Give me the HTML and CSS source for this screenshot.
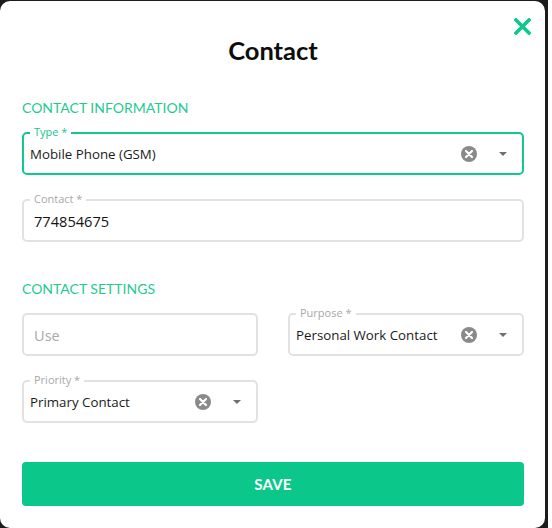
FILE: index.html
```html
<!DOCTYPE html>
<html>
<head>
<meta charset="utf-8">
<title>Contact</title>
<link rel="stylesheet" href="styles.css">
</head>
<body>
<div class="backdrop">
  <div class="modal">
    <button class="close" aria-label="Close">
      <svg width="17" height="17" viewBox="0 0 17 17"><path d="M2 2 L15 15 M15 2 L2 15" stroke="#0dc98b" stroke-width="3.6" stroke-linecap="square" fill="none"/></svg>
    </button>
    <h1 class="title">Contact</h1>

    <h2 class="section-title">CONTACT INFORMATION</h2>
    <div class="stack">
      <div class="field select focused">
        <span class="label">Type *</span>
        <span class="value">Mobile Phone (GSM)</span>
        <span class="clear"><svg width="16" height="16" viewBox="0 0 16 16"><circle cx="8" cy="8" r="8" fill="#8a8a8a"/><path d="M5 5 L11 11 M11 5 L5 11" stroke="#fff" stroke-width="2.2" stroke-linecap="round"/></svg></span>
        <span class="caret"></span>
      </div>
      <div class="field text">
        <span class="label">Contact *</span>
        <span class="value">774854675</span>
      </div>
    </div>

    <h2 class="section-title second">CONTACT SETTINGS</h2>
    <div class="grid">
      <div class="field text">
        <span class="placeholder">Use</span>
      </div>
      <div class="field select">
        <span class="label">Purpose *</span>
        <span class="value">Personal Work Contact</span>
        <span class="clear"><svg width="16" height="16" viewBox="0 0 16 16"><circle cx="8" cy="8" r="8" fill="#8a8a8a"/><path d="M5 5 L11 11 M11 5 L5 11" stroke="#fff" stroke-width="2.2" stroke-linecap="round"/></svg></span>
        <span class="caret"></span>
      </div>
      <div class="field select">
        <span class="label">Priority *</span>
        <span class="value">Primary Contact</span>
        <span class="clear"><svg width="16" height="16" viewBox="0 0 16 16"><circle cx="8" cy="8" r="8" fill="#8a8a8a"/><path d="M5 5 L11 11 M11 5 L5 11" stroke="#fff" stroke-width="2.2" stroke-linecap="round"/></svg></span>
        <span class="caret"></span>
      </div>
    </div>

    <button class="save">SAVE</button>
  </div>
</div>
</body>
</html>
```
FILE: styles.css
```css
html, body {
  margin: 0;
  padding: 0;
  background: #ffffff;
}
.backdrop {
  width: 548px;
  height: 528px;
  background: #1c1c1c;
  overflow: hidden;
  padding-top: 1px;
  box-sizing: border-box;
}
.modal {
  position: relative;
  width: 545px;
  height: 527px;
  box-sizing: border-box;
  background: #ffffff;
  border-radius: 10px;
  padding: 34px 21px 0 22px;
  font-family: "Open Sans", "Noto Sans", sans-serif;
}
.close {
  position: absolute;
  top: 17px;
  right: 14px;
  width: 17px;
  height: 17px;
  padding: 0;
  border: none;
  background: none;
  display: block;
}
.close svg { display: block; }
.title {
  margin: 0;
  text-align: center;
  font-family: Lato, sans-serif;
  font-weight: 700;
  font-size: 25.5px;
  line-height: 30px;
  color: #0d0d0d;
}
.section-title {
  margin: 33px 0 14px 0;
  font-family: Lato, sans-serif;
  font-weight: 400;
  font-size: 14px;
  line-height: 20px;
  color: #1fcb90;
}
.section-title.second {
  margin-top: 37px;
}
.stack {
  display: flex;
  flex-direction: column;
  gap: 24px;
}
.grid {
  display: grid;
  grid-template-columns: 236px 236px;
  column-gap: 30px;
  row-gap: 24px;
}
.field {
  position: relative;
  height: 43px;
  box-sizing: border-box;
  border: 2px solid #e2e2e2;
  border-radius: 5px;
  display: flex;
  align-items: center;
  font-size: 13.3px;
  color: #1a1a1a;
}
.field.focused {
  border-color: #12c88b;
}
.label {
  position: absolute;
  top: -9px;
  left: 6px;
  padding: 0 4px;
  background: #fff;
  font-size: 11px;
  line-height: 13px;
  color: #a8a8a8;
}
.focused .label {
  color: #12c88b;
}
.select {
  padding: 0 15px 0 6px;
}
.text {
  padding: 0 10px;
  font-size: 14.6px;
  color: #111;
}
.value {
  flex: 1;
  white-space: nowrap;
}
.placeholder {
  color: #a9a9a9;
}
.clear {
  width: 16px;
  height: 16px;
}
.clear svg { display: block; }
.caret {
  margin-left: 22px;
  width: 0;
  height: 0;
  border-left: 4px solid transparent;
  border-right: 4px solid transparent;
  border-top: 4px solid #6f6f6f;
}
.save {
  display: block;
  width: 100%;
  height: 44px;
  margin-top: 39px;
  border: none;
  border-radius: 4px;
  background: #0bc78a;
  color: #fff;
  font-family: Lato, sans-serif;
  font-weight: 700;
  font-size: 15px;
  letter-spacing: 0.2px;
}
```
